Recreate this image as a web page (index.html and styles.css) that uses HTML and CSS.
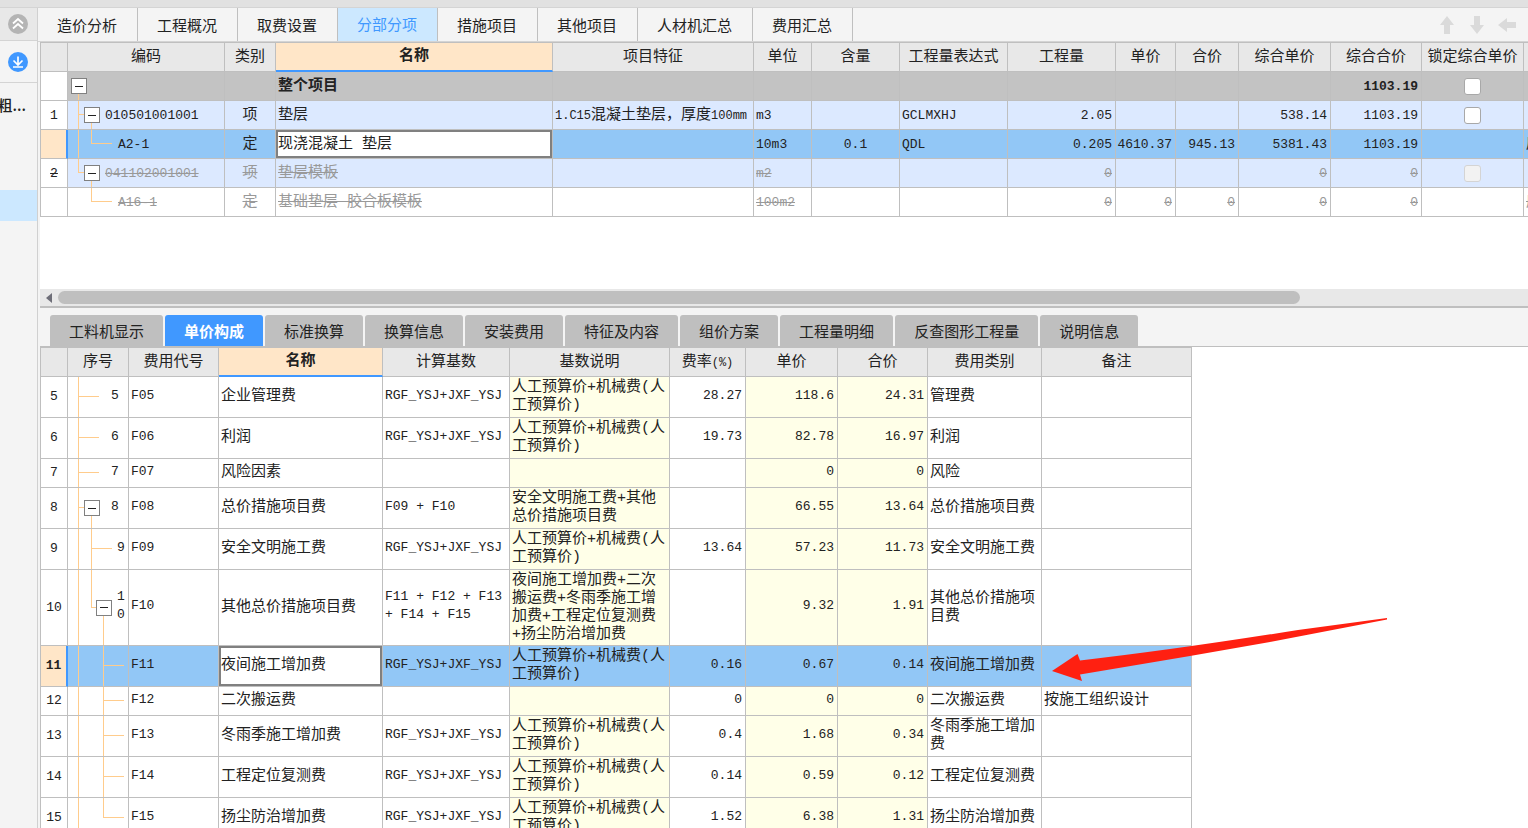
FILE: index.html
```html
<!DOCTYPE html>
<html lang="zh-CN">
<head>
<meta charset="utf-8">
<title>分部分项</title>
<link rel="stylesheet" href="styles.css">
</head>
<body>
<div class="app">
  <div class="titlebar"></div>
  <div class="body">
    <aside class="side">
      <button class="side-btn side-top" type="button" aria-label="收起">
        <svg width="20" height="20" viewBox="0 0 20 20"><circle cx="10" cy="10" r="10" fill="#b4b4b4"/><path d="M5 9.5l5-4.5 5 4.5M5 14.5l5-4.5 5 4.5" fill="none" stroke="#fff" stroke-width="1.8"/></svg>
      </button>
      <button class="side-btn side-down" type="button" aria-label="下载">
        <svg width="20" height="20" viewBox="0 0 20 20"><circle cx="10" cy="10" r="10" fill="#4098ff"/><path d="M10 4.5v8M5.5 8.500l4.500 4.500 4.500-4.500M5 15h10" fill="none" stroke="#fff" stroke-width="1.700"/></svg>
      </button>
      <div class="side-item">粗...</div>
      <div class="side-sel"></div>
    </aside>
    <main class="main">
      <nav class="tabs">
        <button type="button">造价分析</button><button type="button">工程概况</button><button type="button">取费设置</button><button type="button" class="on">分部分项</button><button type="button">措施项目</button><button type="button">其他项目</button><button type="button">人材机汇总</button><button type="button">费用汇总</button>
        <div class="moves">
          <svg width="20" height="20" viewBox="0 0 20 20"><path d="M10 1l7 9h-4v9H7v-9H3z"/></svg>
          <svg width="20" height="20" viewBox="0 0 20 20"><path d="M10 19l7-9h-4V1H7v9H3z"/></svg>
          <svg width="20" height="20" viewBox="0 0 20 20"><path d="M1 10l9-7v4h9v6h-9v4z"/></svg>
        </div>
      </nav>
      <section class="upper">
        <table class="grid wide">
          <colgroup><col class="w27"><col class="w157"><col class="w51"><col class="w277"><col class="w201"><col class="w58"><col class="w88"><col class="w108"><col class="w108"><col class="w60"><col class="w63"><col class="w92"><col class="w91"><col class="w102"><col class="w60"></colgroup>
          <thead><tr><th></th><th>编码</th><th>类别</th><th class="cur">名称</th><th>项目特征</th><th>单位</th><th>含量</th><th>工程量表达式</th><th>工程量</th><th>单价</th><th>合价</th><th>综合单价</th><th>综合合价</th><th>锁定综合单价</th><th></th></tr></thead>
          <tbody>
            <tr class="total"><td class="rn"></td><td class="tree"><i class="v a low"></i><button class="box a" type="button" aria-label="折叠"></button></td><td></td><td>整个项目</td><td></td><td></td><td></td><td></td><td></td><td></td><td></td><td></td><td class="num">1103.19</td><td class="mid"><input type="checkbox" aria-label="锁定综合单价"></td><td></td></tr>
            <tr class="item"><td class="rn">1</td><td class="tree code p37"><i class="v a"></i><i class="h a"></i><i class="v b low"></i><button class="box b" type="button" aria-label="折叠"></button>010501001001</td><td class="mid">项</td><td>垫层</td><td><span class="small">1.C15</span>混凝土垫层，厚度<span class="small">100mm</span></td><td class="code">m3</td><td></td><td class="code">GCLMXHJ</td><td class="num">2.05</td><td></td><td></td><td class="num">538.14</td><td class="num">1103.19</td><td class="mid"><input type="checkbox" aria-label="锁定综合单价"></td><td></td></tr>
            <tr class="sel"><td class="rn"></td><td class="tree code p50"><i class="v a"></i><i class="v b high"></i><i class="h b"></i>A2-1</td><td class="mid">定</td><td class="edit">现浇混凝土 垫层</td><td></td><td class="code">10m3</td><td class="code mid">0.1</td><td class="code">QDL</td><td class="num">0.205</td><td class="num">4610.37</td><td class="num">945.13</td><td class="num">5381.43</td><td class="num">1103.19</td><td></td><td>房</td></tr>
            <tr class="item off"><td class="rn">2</td><td class="tree code p37"><i class="v a high"></i><i class="h a"></i><i class="v b low"></i><button class="box b" type="button" aria-label="折叠"></button>041102001001</td><td class="mid">项</td><td>垫层模板</td><td></td><td class="code">m2</td><td></td><td></td><td class="num">0</td><td></td><td></td><td class="num">0</td><td class="num">0</td><td class="mid"><input type="checkbox" disabled aria-label="锁定综合单价"></td><td></td></tr>
            <tr class="off"><td class="rn"></td><td class="tree code p50"><i class="v b high"></i><i class="h b"></i>A16-1</td><td class="mid">定</td><td>基础垫层 胶合板模板</td><td></td><td class="code">100m2</td><td></td><td></td><td class="num">0</td><td class="num">0</td><td class="num">0</td><td class="num">0</td><td class="num">0</td><td></td><td>房</td></tr>
          </tbody>
        </table>
      </section>
      <div class="scroll">
        <svg width="6" height="10" viewBox="0 0 6 10"><path d="M6 0v10L0 5z" fill="#6e6e78"/></svg>
        <div class="thumb"></div>
      </div>
      <nav class="subtabs">
        <button type="button">工料机显示</button><button type="button" class="on">单价构成</button><button type="button">标准换算</button><button type="button">换算信息</button><button type="button">安装费用</button><button type="button">特征及内容</button><button type="button">组价方案</button><button type="button">工程量明细</button><button type="button">反查图形工程量</button><button type="button">说明信息</button>
      </nav>
      <section class="lower">
        <table class="grid fees">
          <colgroup><col class="w27"><col class="w61"><col class="w90"><col class="w164"><col class="w127"><col class="w160"><col class="w76"><col class="w92"><col class="w90"><col class="w114"><col class="w150"></colgroup>
          <thead><tr><th></th><th>序号</th><th>费用代号</th><th class="cur">名称</th><th>计算基数</th><th>基数说明</th><th>费率<span class="small">(%)</span></th><th>单价</th><th>合价</th><th>费用类别</th><th>备注</th></tr></thead>
          <tbody>
            <tr class="two"><td class="rn">5</td><td class="tree code p43"><i class="v a"></i><i class="h a"></i>5</td><td class="code">F05</td><td>企业管理费</td><td class="code">RGF_YSJ+JXF_YSJ</td><td class="y">人工预算价+机械费(人工预算价)</td><td class="num">28.27</td><td class="num y">118.6</td><td class="num y">24.31</td><td>管理费</td><td></td></tr>
            <tr class="two"><td class="rn">6</td><td class="tree code p43"><i class="v a"></i><i class="h a"></i>6</td><td class="code">F06</td><td>利润</td><td class="code">RGF_YSJ+JXF_YSJ</td><td class="y">人工预算价+机械费(人工预算价)</td><td class="num">19.73</td><td class="num y">82.78</td><td class="num y">16.97</td><td>利润</td><td></td></tr>
            <tr><td class="rn">7</td><td class="tree code p43"><i class="v a"></i><i class="h a"></i>7</td><td class="code">F07</td><td>风险因素</td><td></td><td class="y"></td><td></td><td class="num y">0</td><td class="num y">0</td><td>风险</td><td></td></tr>
            <tr class="two"><td class="rn">8</td><td class="tree code p43"><i class="v a"></i><i class="h a"></i><i class="v b low"></i><button class="box b" type="button" aria-label="折叠"></button>8</td><td class="code">F08</td><td>总价措施项目费</td><td class="code">F09 + F10</td><td class="y">安全文明施工费+其他总价措施项目费</td><td></td><td class="num y">66.55</td><td class="num y">13.64</td><td>总价措施项目费</td><td></td></tr>
            <tr class="two"><td class="rn">9</td><td class="tree code p49"><i class="v a"></i><i class="v b"></i><i class="h b"></i>9</td><td class="code">F09</td><td>安全文明施工费</td><td class="code">RGF_YSJ+JXF_YSJ</td><td class="y">人工预算价+机械费(人工预算价)</td><td class="num">13.64</td><td class="num y">57.23</td><td class="num y">11.73</td><td>安全文明施工费</td><td></td></tr>
            <tr class="four"><td class="rn">10</td><td class="tree code p49"><i class="v a"></i><i class="v b high"></i><i class="h b"></i><i class="v c low"></i><button class="box c" type="button" aria-label="折叠"></button>10</td><td class="code">F10</td><td>其他总价措施项目费</td><td class="code">F11 + F12 + F13 + F14 + F15</td><td class="y">夜间施工增加费+二次搬运费+冬雨季施工增加费+工程定位复测费+扬尘防治增加费</td><td></td><td class="num y">9.32</td><td class="num y">1.91</td><td>其他总价措施项目费</td><td></td></tr>
            <tr class="two sel"><td class="rn">11</td><td class="tree"><i class="v a"></i><i class="v c"></i><i class="h c"></i></td><td class="code">F11</td><td class="edit">夜间施工增加费</td><td class="code">RGF_YSJ+JXF_YSJ</td><td class="y">人工预算价+机械费(人工预算价)</td><td class="num">0.16</td><td class="num y">0.67</td><td class="num y">0.14</td><td>夜间施工增加费</td><td></td></tr>
            <tr><td class="rn">12</td><td class="tree"><i class="v a"></i><i class="v c"></i><i class="h c"></i></td><td class="code">F12</td><td>二次搬运费</td><td></td><td class="y"></td><td class="num">0</td><td class="num y">0</td><td class="num y">0</td><td>二次搬运费</td><td>按施工组织设计</td></tr>
            <tr class="two"><td class="rn">13</td><td class="tree"><i class="v a"></i><i class="v c"></i><i class="h c"></i></td><td class="code">F13</td><td>冬雨季施工增加费</td><td class="code">RGF_YSJ+JXF_YSJ</td><td class="y">人工预算价+机械费(人工预算价)</td><td class="num">0.4</td><td class="num y">1.68</td><td class="num y">0.34</td><td>冬雨季施工增加费</td><td></td></tr>
            <tr class="two"><td class="rn">14</td><td class="tree"><i class="v a"></i><i class="v c"></i><i class="h c"></i></td><td class="code">F14</td><td>工程定位复测费</td><td class="code">RGF_YSJ+JXF_YSJ</td><td class="y">人工预算价+机械费(人工预算价)</td><td class="num">0.14</td><td class="num y">0.59</td><td class="num y">0.12</td><td>工程定位复测费</td><td></td></tr>
            <tr class="two"><td class="rn">15</td><td class="tree"><i class="v a"></i><i class="v c high"></i><i class="h c"></i></td><td class="code">F15</td><td>扬尘防治增加费</td><td class="code">RGF_YSJ+JXF_YSJ</td><td class="y">人工预算价+机械费(人工预算价)</td><td class="num">1.52</td><td class="num y">6.38</td><td class="num y">1.31</td><td>扬尘防治增加费</td><td></td></tr>
          </tbody>
        </table>
        <svg class="pointer" width="336" height="64" viewBox="0 0 336 64"><path d="M0 53L25.500 36 28 42.500Q120 32 246 12L335 0v1.500L218 24 138 38 28 56.500 30 63z" fill="#ff2011"/></svg>
      </section>
    </main>
  </div>
</div>
</body>
</html>
```

FILE: styles.css
```css
* { box-sizing: border-box; }
body {
  margin: 0;
  font: 15px/18px "Liberation Mono", "Noto Sans CJK SC", monospace;
  color: #222;
  background: #f4f4f4;
}
button { font: inherit; color: inherit; border: 0; padding: 0; background: none; }
.app { height: 100vh; display: flex; flex-direction: column; overflow: hidden; }
.titlebar { flex: 0 0 8px; background: #e1e1e1; border-bottom: 1px solid #d4d4d4; }
.body { flex: 1; display: flex; min-height: 0; }

/* side rail */
.side { flex: 0 0 38px; display: flex; flex-direction: column; border-right: 1px solid #d0d0d0; overflow: hidden; }
.side-btn { display: flex; align-items: center; padding-left: 8px; border-bottom: 1px solid #d4d4d4; }
.side-top { height: 33px; background: #e8e8e8; }
.side-down { height: 42px; }
.side-item { display: flex; justify-content: flex-end; padding-right: 11px; margin-top: 13px; font-family: "Noto Sans CJK SC", sans-serif; font-weight: 500; }
.side-sel { height: 31px; margin-top: 76px; background: #cce8ff; }

.main { flex: 1; min-width: 0; display: flex; flex-direction: column; }

/* page tabs */
.tabs { flex: 0 0 34px; display: flex; border-bottom: 1px solid #d4d4d4; font-family: "Noto Sans CJK SC", sans-serif; }
.tabs button { padding: 0 20px 0 19px; border-right: 1px solid #bfbfbf; }
.tabs .on { background: #cce8ff; color: #4098ff; padding-bottom: 2px; }
.moves { margin-left: auto; display: flex; align-items: center; gap: 10px; padding-right: 11px; fill: #dadada; }

.upper { flex: 0 0 247px; margin-left: 2px; background: #fff; overflow: hidden; }

/* data grids */
.grid { table-layout: fixed; border-collapse: separate; border-spacing: 0; border-left: 1px solid #bfbfbf; border-top: 1px solid #bfbfbf; }
.wide { width: 1543px; }
.fees { width: 1151px; }
.w27 { width: 27px; } .w51 { width: 51px; } .w58 { width: 58px; } .w60 { width: 60px; }
.w61 { width: 61px; } .w63 { width: 63px; } .w76 { width: 76px; } .w88 { width: 88px; }
.w90 { width: 90px; } .w91 { width: 91px; } .w92 { width: 92px; } .w102 { width: 102px; }
.w108 { width: 108px; } .w114 { width: 114px; } .w127 { width: 127px; } .w150 { width: 150px; }
.w157 { width: 157px; } .w160 { width: 160px; } .w164 { width: 164px; } .w201 { width: 201px; } .w277 { width: 277px; }
.grid th, .grid td { height: 29px; padding: 0 2px; border-right: 1px solid #bfbfbf; border-bottom: 1px solid #bfbfbf; overflow: hidden; }
.grid th { padding-top: 2px; background: #e8e8e8; font-weight: 400; white-space: nowrap; }
.grid th.cur { padding-top: 0; background: #ffe6c8; font-weight: 700; border-bottom: 2px solid #4098ff; }
.grid td { background: #fff; text-align: left; }
.wide td { white-space: nowrap; }
.grid.wide td { padding-top: 1px; }
.grid .two td { height: 41px; }
.grid .four td { height: 76px; }
.code, .grid .num, .grid .rn { font-size: 13px; }
.small { font-size: 12px; }
.grid .num { text-align: right; padding: 0 3px 0 0; white-space: nowrap; }
.grid .mid { text-align: center; }
.grid .rn { text-align: center; padding: 0; }
.grid.fees .code, .grid.fees .num { padding-bottom: 3px; }
.grid .y { background: #ffffe8; }
.grid .total td { background: #c3c3c3; font-weight: 700; }
.grid .item td { background: #dce9ff; }
.grid .sel td { background: #92c7f6; }
.grid .total .rn, .grid .item .rn { background: #fff; }
.grid .sel .rn { background: #ffe6c8; border-right: 2px solid #4098ff; font-weight: 700; }
.grid .sel .edit { background: #fff; box-shadow: inset 0 0 0 2px #808080; }
.off td { color: #999; text-decoration: line-through; }
.off .rn { color: #222; }

/* tree column */
.grid .tree { position: relative; word-break: break-all; }
.grid .p37 { padding-left: 37px; }
.grid .p43 { padding-left: 43px; }
.grid .p49 { padding-left: 49px; padding-right: 0; }
.grid .p50 { padding-left: 50px; }
.tree .a { --x: 10px; }
.tree .b { --x: 23px; }
.tree .c { --x: 35px; }
.tree i { position: absolute; background: #ffcc8c; }
.v { left: var(--x); top: 0; bottom: -1px; width: 1px; }
.v.high { bottom: 50%; }
.v.low { top: 50%; }
.h { left: var(--x); top: calc(50% - 1px); width: 21px; height: 1px; }
.box { position: absolute; left: calc(var(--x) - 7px); top: calc(50% - 8px); width: 16px; height: 16px; border: 1px solid #808080; background: #fff; }
.box::after { content: ""; display: block; width: 8px; height: 1px; margin: 0 auto; background: #222; }

.grid input { appearance: none; display: block; width: 17px; height: 17px; margin: 0 auto; border: 1px solid #a8a8a8; border-radius: 3px; background: #fff; }
.grid input:disabled { background: #f2f2f2; border-color: #d4d4d4; }

/* horizontal scroll bar */
.scroll { flex: 0 0 19px; margin-left: 2px; padding: 0 228px 0 6px; display: flex; align-items: center; gap: 6px; background: #e8e8e8; border-bottom: 2px solid #bfbfbf; }
.thumb { flex: 1; height: 13px; border-radius: 7px; background: #bfbfbf; }

/* detail tabs */
.subtabs { flex: 0 0 38px; display: flex; gap: 2px; padding: 7px 0 0 12px; font-family: "Noto Sans CJK SC", sans-serif; }
.subtabs button { padding: 0 19px; background: #bfbfbf; border-radius: 3px 3px 0 0; }
.subtabs .on { background: #4098ff; color: #fff; font-weight: 700; }

.lower { flex: 1; min-height: 0; position: relative; margin-left: 2px; background: #fff; border-top: 1px solid #bfbfbf; overflow: hidden; }
.pointer { position: absolute; left: 1012px; top: 271px; }
```
